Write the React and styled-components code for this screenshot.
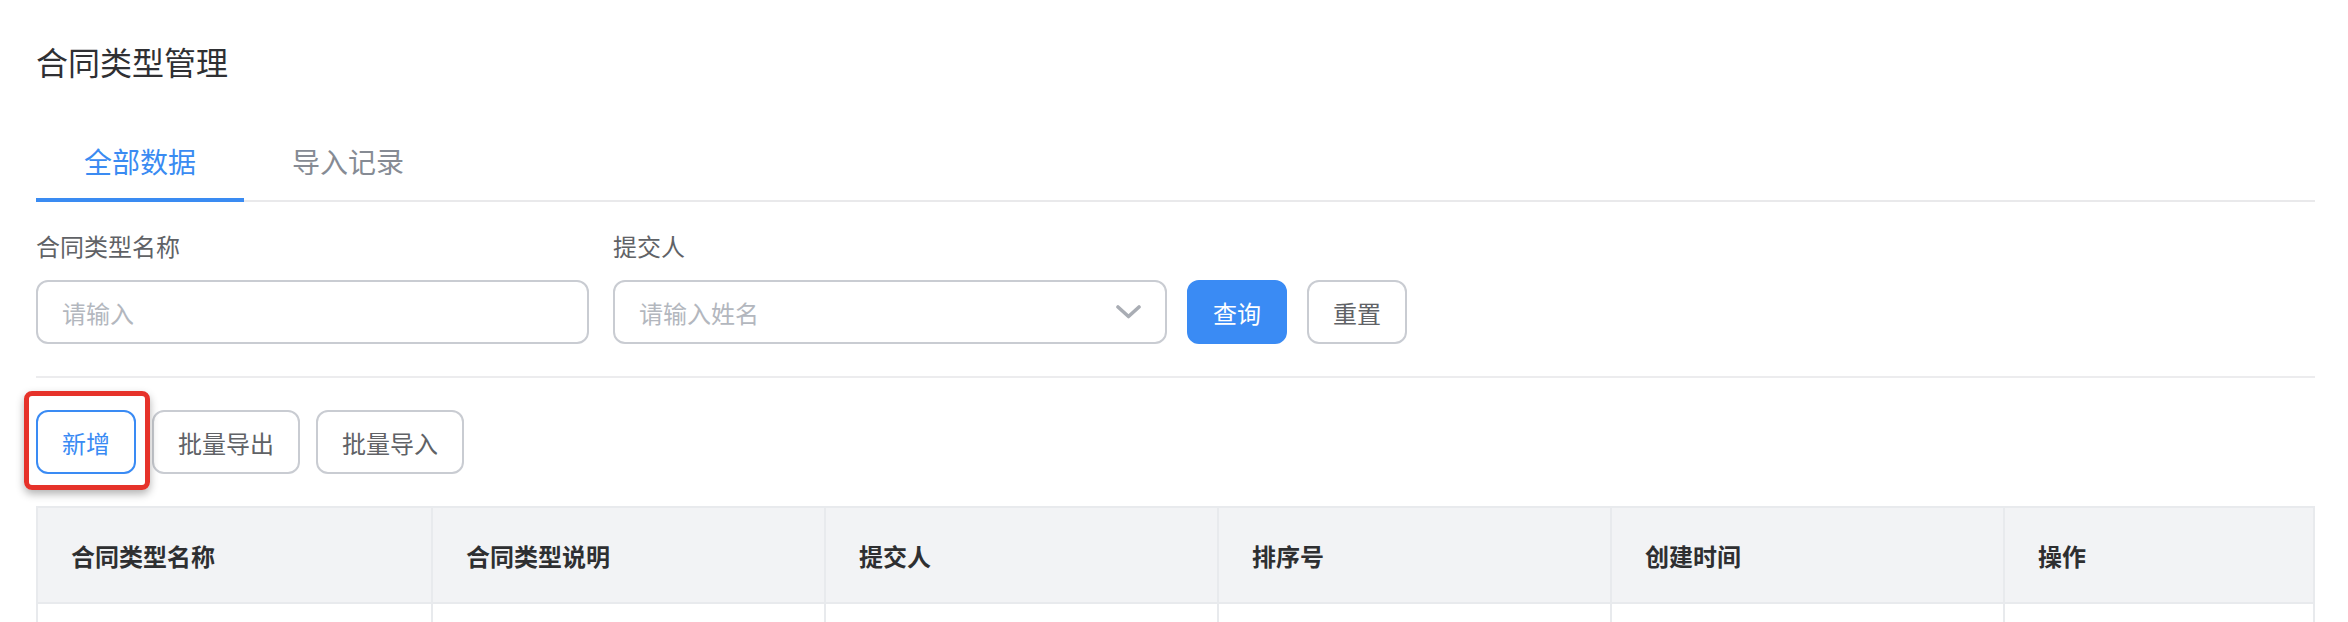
import React from "react";
import styled, { createGlobalStyle } from "styled-components";

const GlobalStyle = createGlobalStyle`
  html, body {
    margin: 0;
    padding: 0;
    background: #ffffff;
  }
  body {
    font-family: "Noto Sans CJK SC", "Noto Sans", "Liberation Sans", sans-serif;
    color: #303133;
  }
  * { box-sizing: border-box; }
`;

const Page = styled.div`
  padding: 39px 33px 0 36px;
  width: 2348px;
`;

const Title = styled.h1`
  margin: 0;
  font-size: 32px;
  font-weight: 400;
  line-height: 44px;
  height: 44px;
  color: #2f3033;
`;

const TabsBar = styled.div`
  margin-top: 37px;
  display: flex;
  border-bottom: 2px solid #e9e9eb;
  height: 82px;
`;

const Tab = styled.div`
  position: relative;
  width: 208px;
  height: 82px;
  margin-bottom: -2px;
  line-height: 82px;
  text-align: center;
  font-size: 28px;
  color: ${(p) => (p.$active ? "#3a8bf2" : "#868b94")};
  &::after {
    content: "";
    display: ${(p) => (p.$active ? "block" : "none")};
    position: absolute;
    left: 0;
    right: 0;
    bottom: 0;
    height: 4px;
    background: #3a8bf2;
  }
`;

const FilterRow = styled.div`
  padding-top: 28px;
  display: flex;
  align-items: flex-end;
`;

const Field = styled.div`
  display: flex;
  flex-direction: column;
  margin-right: ${(p) => p.$gap || 0}px;
`;

const Label = styled.div`
  font-size: 24px;
  line-height: 32px;
  color: #606266;
  margin-bottom: 18px;
`;

const InputBox = styled.div`
  position: relative;
  width: ${(p) => p.$width}px;
  height: 64px;
  border: 2px solid #c9ccd2;
  border-radius: 12px;
  display: flex;
  align-items: center;
  padding: 0 24px;
  font-size: 24px;
  color: #b3b7be;
  justify-content: space-between;
`;

const Chevron = styled.svg`
  width: 25px;
  height: 14px;
`;

const Button = styled.div`
  height: 64px;
  padding: 0 24px;
  border-radius: 12px;
  font-size: 24px;
  display: flex;
  align-items: center;
  justify-content: center;
  white-space: nowrap;
  border: 2px solid
    ${(p) =>
      p.$variant === "primary"
        ? "#3a8bf4"
        : p.$variant === "plain"
        ? "#3a8bf4"
        : "#c9ccd2"};
  background: ${(p) => (p.$variant === "primary" ? "#3a8bf4" : "#ffffff")};
  color: ${(p) =>
    p.$variant === "primary"
      ? "#ffffff"
      : p.$variant === "plain"
      ? "#3a8bf4"
      : "#606266"};
  margin-left: ${(p) => p.$ml || 0}px;
`;

const Divider = styled.div`
  margin-top: 32px;
  height: 2px;
  background: #ececee;
`;

const ActionBar = styled.div`
  position: relative;
  margin-top: 32px;
  display: flex;
  gap: 16px;
`;

const Highlight = styled.div`
  position: absolute;
  left: -12px;
  top: -19px;
  width: 126px;
  height: 99px;
  border: 5px solid #e6322a;
  border-radius: 8px;
  box-shadow: 0 4px 8px rgba(0, 0, 0, 0.3);
  pointer-events: none;
`;

const Table = styled.div`
  margin-top: 32px;
  border: 2px solid #e8eaed;
  border-bottom: none;
`;

const Row = styled.div`
  display: grid;
  grid-template-columns: repeat(5, 393px) 1fr;
  background: ${(p) => (p.$head ? "#f2f3f5" : "#ffffff")};
  border-bottom: 2px solid #e8eaed;
  height: 96px;
`;

const Cell = styled.div`
  display: flex;
  align-items: center;
  padding-left: 33px;
  font-size: 24px;
  font-weight: ${(p) => (p.$head ? 700 : 400)};
  color: #2e2f31;
  border-left: ${(p) => (p.$first ? "none" : "2px solid #e8eaed")};
`;

const columns = ["合同类型名称", "合同类型说明", "提交人", "排序号", "创建时间", "操作"];

export default function App() {
  return (
    <>
      <GlobalStyle />
      <Page>
        <Title>合同类型管理</Title>
        <TabsBar>
          <Tab $active>全部数据</Tab>
          <Tab>导入记录</Tab>
        </TabsBar>
        <FilterRow>
          <Field $gap={24}>
            <Label>合同类型名称</Label>
            <InputBox $width={553}>请输入</InputBox>
          </Field>
          <Field $gap={20}>
            <Label>提交人</Label>
            <InputBox $width={554}>
              <span>请输入姓名</span>
              <Chevron viewBox="0 0 25 14">
                <polyline
                  points="2,2 12.5,11.5 23,2"
                  fill="none"
                  stroke="#a9adb4"
                  strokeWidth="3.6"
                  strokeLinecap="round"
                  strokeLinejoin="round"
                />
              </Chevron>
            </InputBox>
          </Field>
          <Button $variant="primary">查询</Button>
          <Button $ml={20}>重置</Button>
        </FilterRow>
        <Divider />
        <ActionBar>
          <Button $variant="plain">新增</Button>
          <Button>批量导出</Button>
          <Button>批量导入</Button>
          <Highlight />
        </ActionBar>
        <Table>
          <Row $head>
            {columns.map((c, i) => (
              <Cell key={c} $head $first={i === 0}>
                {c}
              </Cell>
            ))}
          </Row>
          <Row>
            {columns.map((c, i) => (
              <Cell key={c} $first={i === 0} />
            ))}
          </Row>
        </Table>
      </Page>
    </>
  );
}
